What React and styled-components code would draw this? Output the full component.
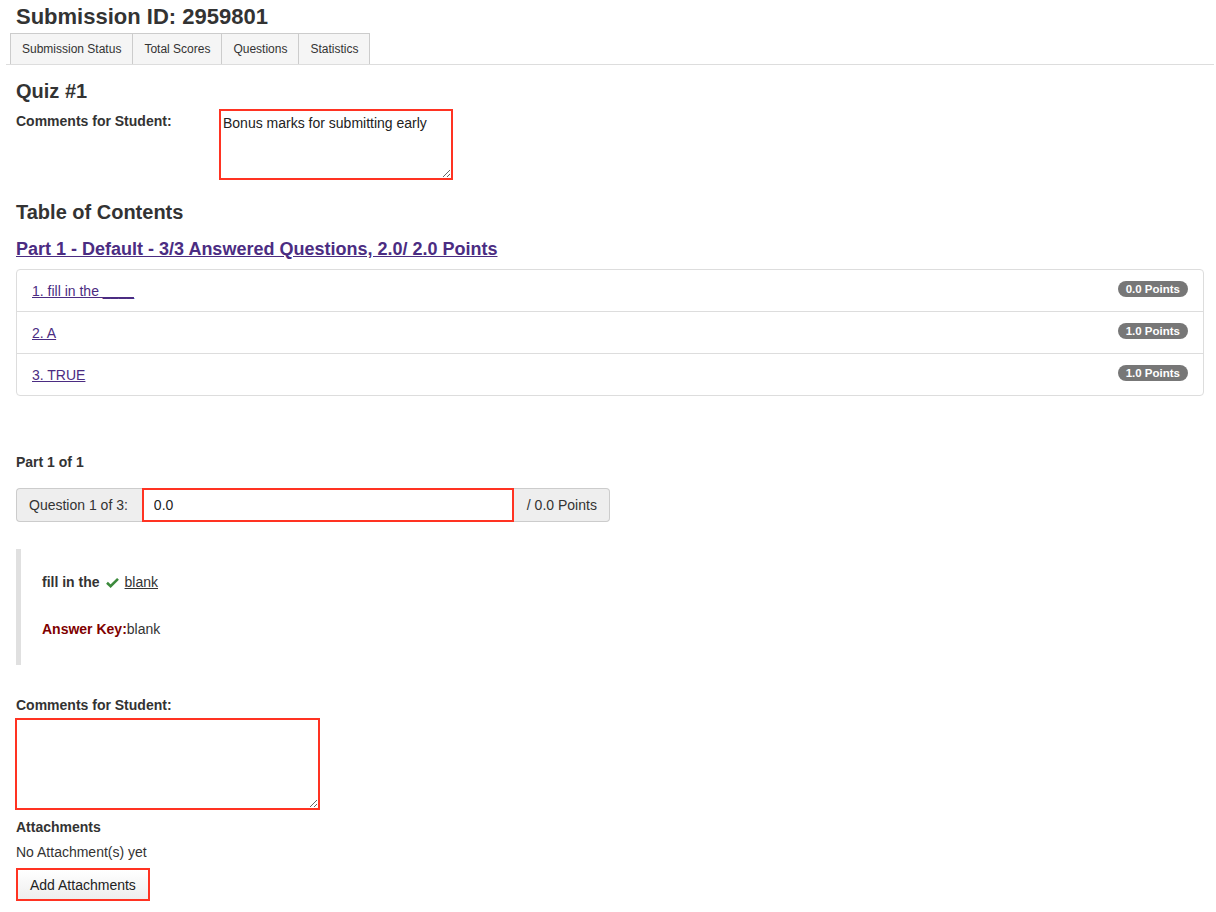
import styled, { createGlobalStyle } from "styled-components"

const Global = createGlobalStyle`
  body {
    margin: 0;
    background: #fff;
    font-family: "Liberation Sans", Arial, Helvetica, sans-serif;
    color: #333;
  }
`

const Page = styled.div`
  padding: 4px 12px 12px 16px;
  width: 1188px;
`

const Title = styled.h1`
  margin: 0;
  font-size: 22px;
  line-height: 26px;
  font-weight: bold;
  color: #333;
`

const Tabs = styled.div`
  display: flex;
  margin: 3px -10px 0 -10px;
  padding-left: 4px;
  border-bottom: 1px solid #ddd;
`

const Tab = styled.div`
  height: 30px;
  padding: 0 11px;
  display: flex;
  align-items: center;
  font-size: 12px;
  color: #333;
  background: #f5f5f5;
  border: 1px solid #ccc;
  border-bottom: none;
  margin-right: -1px;
`

const SubTitle = styled.h2`
  margin: 14px 0 0;
  font-size: 20px;
  line-height: 24px;
  font-weight: bold;
`

const CommentRow = styled.div`
  display: flex;
  align-items: flex-start;
  margin-top: 6px;
`

const Label = styled.div`
  font-size: 14px;
  font-weight: bold;
  color: #333;
  width: 203px;
  padding-top: 4px;
`

const TextArea = styled.textarea`
  box-sizing: border-box;
  display: block;
  width: ${p => p.$w}px;
  height: ${p => p.$h}px;
  border: 2px solid #ff3322;
  font-family: "Liberation Sans", Arial, sans-serif;
  font-size: 14px;
  color: #222;
  padding: 4px 2px;
  margin: ${p => p.$m || "0"};
  resize: both;
  outline: none;
`

const Heading = styled.h2`
  margin: 20px 0 0;
  font-size: 20px;
  line-height: 24px;
  font-weight: bold;
`

const PartLink = styled.a`
  display: inline-block;
  margin-top: 14px;
  font-size: 18px;
  font-weight: bold;
  color: #4b2c82;
  text-decoration: underline;
  line-height: 22px;
`

const List = styled.div`
  margin-top: 9px;
  border: 1px solid #ddd;
  border-radius: 4px;
`

const Item = styled.div`
  height: 41px;
  display: flex;
  align-items: center;
  justify-content: space-between;
  padding: 0 15px;
  & + & {
    border-top: 1px solid #ddd;
  }
`

const ItemLink = styled.a`
  font-size: 14px;
  color: #4b2c82;
  text-decoration: underline;
`

const Badge = styled.span`
  background: #777;
  color: #fff;
  font-size: 11.5px;
  font-weight: bold;
  border-radius: 9px;
  padding: 2px 8px;
  line-height: 12px;
  margin-top: -3px;
`

const PartHeading = styled.div`
  margin-top: 58px;
  font-size: 14px;
  font-weight: bold;
`

const InputGroup = styled.div`
  display: flex;
  margin-top: 18px;
  height: 34px;
`

const Addon = styled.div`
  display: flex;
  align-items: center;
  padding: 0 12px;
  font-size: 14px;
  background: #eee;
  border: 1px solid #ccc;
  border-radius: ${p => (p.$left ? "4px 0 0 4px" : "0 4px 4px 0")};
  box-sizing: border-box;
  ${p => (p.$left ? "border-right: none; padding-right: 14px;" : "border-left: none; padding-left: 13px;")}
`

const ScoreInput = styled.input`
  box-sizing: border-box;
  width: 372px;
  height: 34px;
  border: 2px solid #ff3322;
  font-family: "Liberation Sans", Arial, sans-serif;
  font-size: 14px;
  padding: 0 10px;
  color: #222;
  outline: none;
`

const Quote = styled.div`
  margin-top: 27px;
  border-left: 5px solid #e0e0e0;
  padding: 25px 21px 28px;
  font-size: 14px;
`

const QLine = styled.div`
  display: flex;
  align-items: center;
  font-weight: bold;
  & + & {
    margin-top: 31px;
  }
`

const Check = styled.svg`
  margin: 0 6px;
`

const Answer = styled.span`
  font-weight: normal;
  text-decoration: ${p => (p.$u ? "underline" : "none")};
  color: #333;
`

const KeyLabel = styled.span`
  color: #800000;
`

const FieldLabel = styled.div`
  font-size: 14px;
  font-weight: bold;
  margin-top: ${p => p.$mt}px;
`

const Plain = styled.div`
  font-size: 14px;
  margin-top: 9px;
`

const Button = styled.button`
  display: block;
  margin-top: 8px;
  height: 33px;
  padding: 0 12px;
  border: 2px solid #ff3322;
  background: linear-gradient(#fff, #eee);
  font-family: "Liberation Sans", Arial, sans-serif;
  font-size: 14px;
  color: #222;
`

const questions = [
  { text: "1. fill in the ____", pts: "0.0 Points" },
  { text: "2. A", pts: "1.0 Points" },
  { text: "3. TRUE", pts: "1.0 Points" },
]

export default function App() {
  return (
    <Page>
      <Global />
      <Title>Submission ID: 2959801</Title>
      <Tabs>
        <Tab>Submission Status</Tab>
        <Tab>Total Scores</Tab>
        <Tab>Questions</Tab>
        <Tab>Statistics</Tab>
      </Tabs>
      <SubTitle>Quiz #1</SubTitle>
      <CommentRow>
        <Label>Comments for Student:</Label>
        <TextArea $w={234} $h={71} defaultValue="Bonus marks for submitting early" />
      </CommentRow>
      <Heading>Table of Contents</Heading>
      <PartLink>Part 1 - Default - 3/3 Answered Questions, 2.0/ 2.0 Points</PartLink>
      <List>
        {questions.map(q => (
          <Item key={q.text}>
            <ItemLink>{q.text}</ItemLink>
            <Badge>{q.pts}</Badge>
          </Item>
        ))}
      </List>
      <PartHeading>Part 1 of 1</PartHeading>
      <InputGroup>
        <Addon $left>Question 1 of 3:</Addon>
        <ScoreInput defaultValue="0.0" />
        <Addon>/ 0.0 Points</Addon>
      </InputGroup>
      <Quote>
        <QLine>
          fill in the
          <Check width="13" height="11" viewBox="0 0 13 11">
            <path d="M1 5.8 L4.6 9.2 L12 1.8" fill="none" stroke="#3c8a3c" strokeWidth="2.6" />
          </Check>
          <Answer $u>blank</Answer>
        </QLine>
        <QLine>
          <KeyLabel>Answer Key:</KeyLabel>
          <Answer>blank</Answer>
        </QLine>
      </Quote>
      <FieldLabel $mt={32}>Comments for Student:</FieldLabel>
      <TextArea $w={305} $h={92} $m="5px 0 0 -1px" />
      <FieldLabel $mt={9}>Attachments</FieldLabel>
      <Plain>No Attachment(s) yet</Plain>
      <Button>Add Attachments</Button>
    </Page>
  )
}
